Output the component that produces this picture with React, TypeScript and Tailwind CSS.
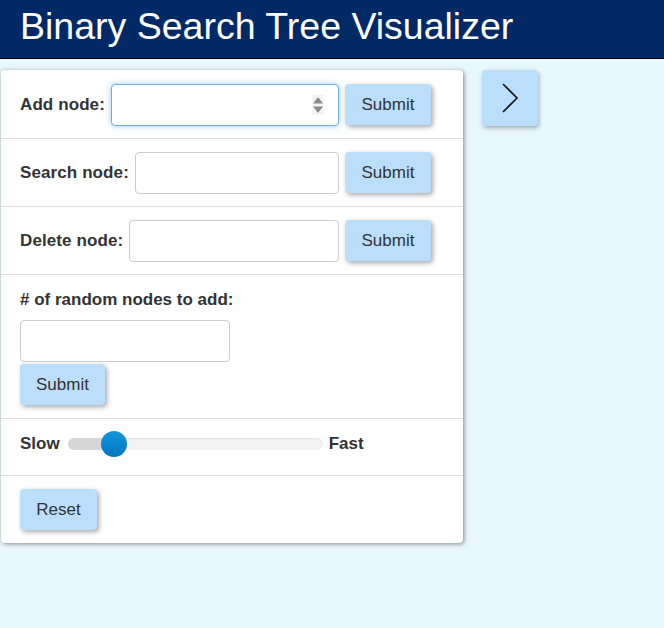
import { useState } from 'react';

function SubmitButton({ label = 'Submit', className = '' }: { label?: string; className?: string }) {
  return (
    <button
      className={`h-[41px] rounded-[4px] bg-[#bbdefb] px-[16px] text-[17px] text-[#333] shadow-[2px_2px_5px_rgba(0,0,0,0.35)] ${className}`}
    >
      {label}
    </button>
  );
}

function InlineRow({ label, focused = false, spinner = false }: { label: string; focused?: boolean; spinner?: boolean }) {
  return (
    <div className="flex h-[68px] items-center border-b border-[#ddd] pl-[19px] pr-[32px]">
      <label className="mr-[6px] shrink-0 text-[17px] font-bold tracking-[0.1px] text-[#333]">{label}</label>
      <div className="relative mr-[6px] flex-1">
        <input
          className={`h-[42px] w-full rounded-[4px] border bg-white px-3 text-[17px] outline-none ${
            focused
              ? 'border-[#66afe9] shadow-[0_0_6px_rgba(102,175,233,0.6)]'
              : 'border-[#ccc]'
          }`}
        />
        {spinner && (
          <svg className="absolute right-[15px] top-[11px]" width="12" height="20" viewBox="0 0 12 20">
            <rect x="0" y="0" width="12" height="20" fill="#f4f4f4" />
            <polygon points="6,2 11,8.5 1,8.5" fill="#8a8a8a" />
            <polygon points="6,18 11,11.5 1,11.5" fill="#8a8a8a" />
          </svg>
        )}
      </div>
      <SubmitButton className="w-[86px] shrink-0 px-0" />
    </div>
  );
}

export default function App() {
  const [speed] = useState(18);

  return (
    <div className="min-h-[628px] bg-[#e8f7fc] font-['Liberation_Sans',Arial,sans-serif]">
      <header className="h-[59px] border-b border-black bg-[#002966] pl-[20px]">
        <h1 className="text-[37.5px] leading-[52px] text-white">Binary Search Tree Visualizer</h1>
      </header>

      <div className="flex items-start gap-[19px] pl-px pt-[11px]">
        <div className="w-[462px] rounded-[4px] bg-white pt-px shadow-[1px_1px_4px_rgba(0,0,0,0.45)]">
          <InlineRow label="Add node:" focused spinner />
          <InlineRow label="Search node:" />
          <InlineRow label="Delete node:" />

          <div className="border-b border-[#ddd] px-[19px] pb-[13px] pt-[15px]">
            <label className="block text-[17px] font-bold leading-[20px] text-[#333]">
              # of random nodes to add:
            </label>
            <input className="mt-[10px] block h-[42px] w-[210px] rounded-[4px] border border-[#ccc] bg-white outline-none" />
            <SubmitButton className="mt-[2px] w-[85px] px-0" />
          </div>

          <div className="flex h-[57px] items-center border-b border-[#ddd] px-[19px] pb-[6px]">
            <span className="text-[17px] font-bold text-[#333]">Slow</span>
            <div className="relative ml-[8px] mr-[6px] h-[12px] w-[255px] rounded-full bg-[#f3f3f3] shadow-[inset_0_1px_2px_rgba(0,0,0,0.08)]">
              <div
                className="h-full rounded-l-full bg-[#d6d6d6]"
                style={{ width: `${(speed / 100) * 255}px` }}
              />
              <div
                className="absolute top-1/2 h-[26px] w-[26px] -translate-x-1/2 -translate-y-1/2 rounded-full bg-gradient-to-b from-[#1496db] to-[#0077c0]"
                style={{ left: `${(speed / 100) * 255}px` }}
              />
            </div>
            <span className="text-[17px] font-bold text-[#333]">Fast</span>
          </div>

          <div className="flex h-[67px] items-center px-[19px]">
            <SubmitButton label="Reset" className="w-[77px] px-0" />
          </div>
        </div>

        <button className="flex h-[56px] w-[56px] items-center justify-center rounded-[4px] bg-[#bbdefb] shadow-[1px_2px_4px_rgba(0,0,0,0.3)]">
          <svg width="20" height="32" viewBox="0 0 20 32" fill="none">
            <polyline points="3,2 17,16 3,30" stroke="#111" strokeWidth="1.6" />
          </svg>
        </button>
      </div>
    </div>
  );
}
